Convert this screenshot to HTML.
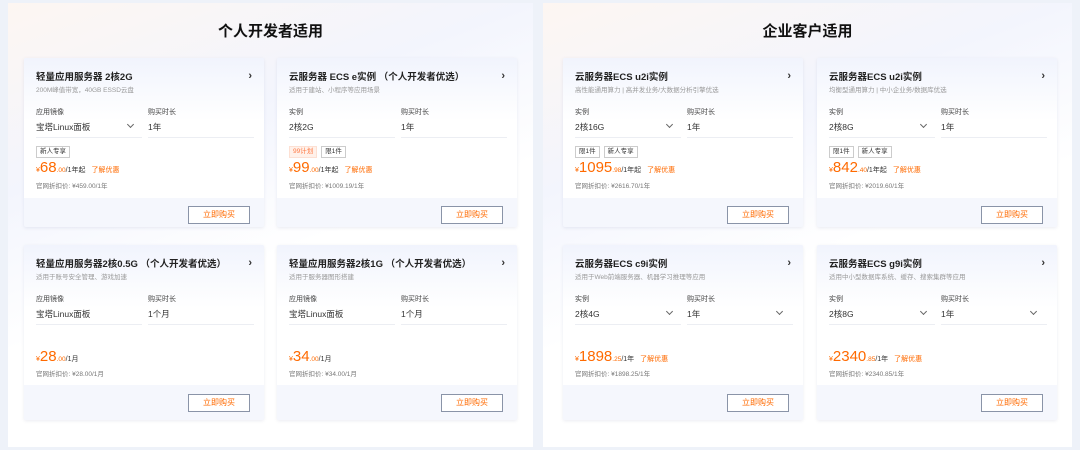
<!DOCTYPE html><html><head><meta charset="utf-8"><style>
*{margin:0;padding:0;box-sizing:border-box}
body{width:1080px;height:450px;background:#eef2f9;font-family:"Liberation Sans","Noto Sans CJK SC",sans-serif;position:relative;overflow:hidden;color:#222}
.panel{position:absolute;top:3px;height:444px;background:linear-gradient(160deg,#fdf6f2 0%,#f3f5fd 30%,#ffffff 55%);}
.pt{position:absolute;top:17px;left:0;right:0;text-align:center;font-size:15px;font-weight:bold;color:#111}
.card{position:absolute;width:240px;background:#f5f7fd;border-radius:2px;box-shadow:0 1px 3px rgba(120,130,170,.15);overflow:hidden}
.top{position:absolute;left:0;right:0;top:0;height:140px;background:linear-gradient(180deg,#f1f4fd 0%,#fff 45%)}
.t{position:absolute;left:12px;top:11px;font-size:9.5px;font-weight:bold;color:#222}
.ar{position:absolute;right:12px;top:12px;font-size:11px;font-weight:bold;color:#333}
.s{position:absolute;left:12px;top:26px;font-size:6.5px;color:#999;white-space:nowrap}
.l{position:absolute;top:49px;font-size:7px;color:#444}
.v{position:absolute;top:63px;font-size:8.5px;color:#333}
.d{position:absolute;top:79px;height:1px;background:#eceef3}
.chev{position:absolute;top:64px;width:5px;height:5px;border-right:1px solid #666;border-bottom:1px solid #666;transform:rotate(45deg)}
.tags{position:absolute;left:12px;top:88px;display:flex;gap:4px}
.tg{font-size:6.5px;border:1px solid #ccc;padding:1px 3px;color:#333;background:#fff;line-height:8px}
.tg.o{border-color:#fde0d3;background:#fff1ea;color:#ff7a45}
.p{position:absolute;left:12px;top:101px;color:#ff6a00;white-space:nowrap;font-size:7px}
.p b{font-size:15px;font-weight:normal}
.p i{font-style:normal;font-size:6.5px}
.p span{color:#333;font-size:7px}
.p em{font-style:normal;margin-left:6px;font-size:7px}
.o2{position:absolute;left:12px;top:122px;font-size:6.5px;color:#777}
.btn{position:absolute;right:14px;top:148px;width:62px;height:18px;border:1px solid #8a94a8;background:#fff;color:#ff6a00;font-size:8px;text-align:center;line-height:16px}
</style></head><body>
<div class="panel" style="left:8px;width:525px"><div class="pt">个人开发者适用</div></div>
<div class="panel" style="left:543px;width:529px"><div class="pt">企业客户适用</div></div>

<div class="card" style="left:24px;top:58px;height:169px"><div class="top"></div>
<div class="t">轻量应用服务器 2核2G</div><div class="ar">›</div>
<div class="s">200M峰值带宽，40GB ESSD云盘</div>
<div class="l" style="left:12px">应用镜像</div><div class="l" style="left:124px">购买时长</div>
<div class="v" style="left:12px">宝塔Linux面板</div><div class="chev" style="left:104px"></div><div class="v" style="left:124px">1年</div>
<div class="d" style="left:12px;width:106px"></div><div class="d" style="left:124px;width:106px"></div>
<div class="tags"><span class="tg">新人专享</span></div>
<div class="p">¥<b>68</b><i>.00</i><span>/1年起</span><em>了解优惠</em></div>
<div class="o2">官网折扣价: ¥459.00/1年</div>
<div class="btn">立即购买</div></div>

<div class="card" style="left:277px;top:58px;height:169px"><div class="top"></div>
<div class="t">云服务器 ECS e实例 （个人开发者优选）</div><div class="ar">›</div>
<div class="s">适用于建站、小程序等应用场景</div>
<div class="l" style="left:12px">实例</div><div class="l" style="left:124px">购买时长</div>
<div class="v" style="left:12px">2核2G</div><div class="v" style="left:124px">1年</div>
<div class="d" style="left:12px;width:106px"></div><div class="d" style="left:124px;width:106px"></div>
<div class="tags"><span class="tg o">99计划</span><span class="tg">限1件</span></div>
<div class="p">¥<b>99</b><i>.00</i><span>/1年起</span><em>了解优惠</em></div>
<div class="o2">官网折扣价: ¥1009.19/1年</div>
<div class="btn">立即购买</div></div>

<div class="card" style="left:24px;top:245px;height:175px"><div class="top"></div>
<div class="t">轻量应用服务器2核0.5G （个人开发者优选）</div><div class="ar">›</div>
<div class="s">适用于账号安全管理、游戏加速</div>
<div class="l" style="left:12px">应用镜像</div><div class="l" style="left:124px">购买时长</div>
<div class="v" style="left:12px">宝塔Linux面板</div><div class="v" style="left:124px">1个月</div>
<div class="d" style="left:12px;width:106px"></div><div class="d" style="left:124px;width:106px"></div>
<div class="p" style="top:103px">¥<b>28</b><i>.00</i><span>/1月</span></div>
<div class="o2" style="top:123px">官网折扣价: ¥28.00/1月</div>
<div class="btn" style="top:149px">立即购买</div></div>

<div class="card" style="left:277px;top:245px;height:175px"><div class="top"></div>
<div class="t">轻量应用服务器2核1G （个人开发者优选）</div><div class="ar">›</div>
<div class="s">适用于服务器图形搭建</div>
<div class="l" style="left:12px">应用镜像</div><div class="l" style="left:124px">购买时长</div>
<div class="v" style="left:12px">宝塔Linux面板</div><div class="v" style="left:124px">1个月</div>
<div class="d" style="left:12px;width:106px"></div><div class="d" style="left:124px;width:106px"></div>
<div class="p" style="top:103px">¥<b>34</b><i>.00</i><span>/1月</span></div>
<div class="o2" style="top:123px">官网折扣价: ¥34.00/1月</div>
<div class="btn" style="top:149px">立即购买</div></div>

<div class="card" style="left:563px;top:58px;height:169px"><div class="top"></div>
<div class="t">云服务器ECS u2i实例</div><div class="ar">›</div>
<div class="s">高性能通用算力 | 高并发业务/大数据分析引擎优选</div>
<div class="l" style="left:12px">实例</div><div class="l" style="left:124px">购买时长</div>
<div class="v" style="left:12px">2核16G</div><div class="chev" style="left:104px"></div><div class="v" style="left:124px">1年</div>
<div class="d" style="left:12px;width:106px"></div><div class="d" style="left:124px;width:106px"></div>
<div class="tags"><span class="tg">限1件</span><span class="tg">新人专享</span></div>
<div class="p">¥<b>1095</b><i>.98</i><span>/1年起</span><em>了解优惠</em></div>
<div class="o2">官网折扣价: ¥2616.70/1年</div>
<div class="btn">立即购买</div></div>

<div class="card" style="left:817px;top:58px;height:169px"><div class="top"></div>
<div class="t">云服务器ECS u2i实例</div><div class="ar">›</div>
<div class="s">均衡型通用算力 | 中小企业务/数据库优选</div>
<div class="l" style="left:12px">实例</div><div class="l" style="left:124px">购买时长</div>
<div class="v" style="left:12px">2核8G</div><div class="chev" style="left:104px"></div><div class="v" style="left:124px">1年</div>
<div class="d" style="left:12px;width:106px"></div><div class="d" style="left:124px;width:106px"></div>
<div class="tags"><span class="tg">限1件</span><span class="tg">新人专享</span></div>
<div class="p">¥<b>842</b><i>.40</i><span>/1年起</span><em>了解优惠</em></div>
<div class="o2">官网折扣价: ¥2019.60/1年</div>
<div class="btn">立即购买</div></div>

<div class="card" style="left:563px;top:245px;height:175px"><div class="top"></div>
<div class="t">云服务器ECS c9i实例</div><div class="ar">›</div>
<div class="s">适用于Web前端服务器、机器学习推理等应用</div>
<div class="l" style="left:12px">实例</div><div class="l" style="left:124px">购买时长</div>
<div class="v" style="left:12px">2核4G</div><div class="chev" style="left:104px"></div><div class="v" style="left:124px">1年</div><div class="chev" style="left:214px"></div>
<div class="d" style="left:12px;width:106px"></div><div class="d" style="left:124px;width:106px"></div>
<div class="p" style="top:103px">¥<b>1898</b><i>.25</i><span>/1年</span><em>了解优惠</em></div>
<div class="o2" style="top:123px">官网折扣价: ¥1898.25/1年</div>
<div class="btn" style="top:149px">立即购买</div></div>

<div class="card" style="left:817px;top:245px;height:175px"><div class="top"></div>
<div class="t">云服务器ECS g9i实例</div><div class="ar">›</div>
<div class="s">适用中小型数据库系统、缓存、搜索集群等应用</div>
<div class="l" style="left:12px">实例</div><div class="l" style="left:124px">购买时长</div>
<div class="v" style="left:12px">2核8G</div><div class="chev" style="left:104px"></div><div class="v" style="left:124px">1年</div><div class="chev" style="left:214px"></div>
<div class="d" style="left:12px;width:106px"></div><div class="d" style="left:124px;width:106px"></div>
<div class="p" style="top:103px">¥<b>2340</b><i>.85</i><span>/1年</span><em>了解优惠</em></div>
<div class="o2" style="top:123px">官网折扣价: ¥2340.85/1年</div>
<div class="btn" style="top:149px">立即购买</div></div>
</body></html>
